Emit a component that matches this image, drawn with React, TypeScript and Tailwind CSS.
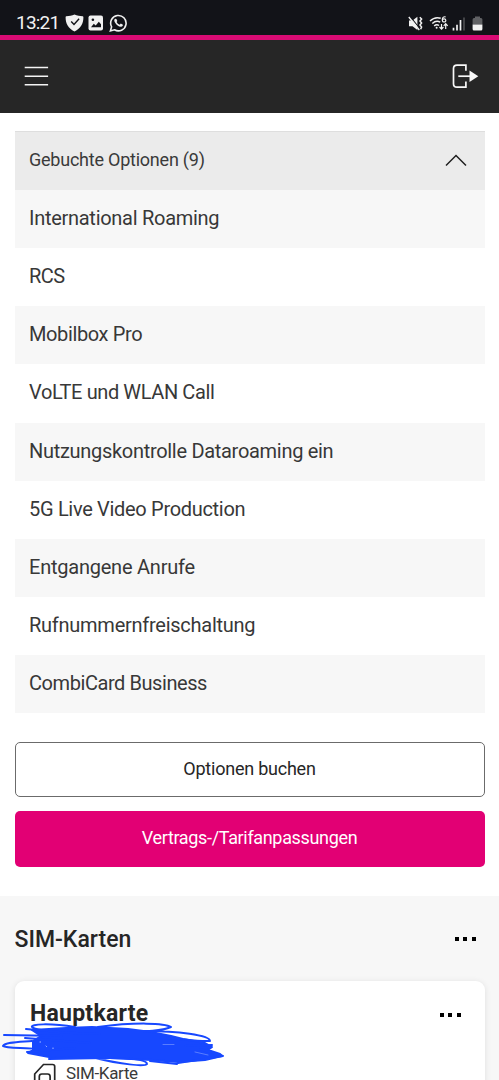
const options = [
  { name: "International Roaming", spacing: "tracking-[-0.28px]" },
  { name: "RCS", spacing: "tracking-[-0.6px]" },
  { name: "Mobilbox Pro", spacing: "tracking-[-0.38px]" },
  { name: "VoLTE und WLAN Call", spacing: "tracking-[-0.4px]" },
  { name: "Nutzungskontrolle Dataroaming ein", spacing: "tracking-[-0.3px]" },
  { name: "5G Live Video Production", spacing: "tracking-[-0.31px]" },
  { name: "Entgangene Anrufe", spacing: "tracking-[-0.23px]" },
  { name: "Rufnummernfreischaltung", spacing: "tracking-[-0.26px]" },
  { name: "CombiCard Business", spacing: "tracking-[-0.43px]" },
];

function StatusBar() {
  return (
    <div className="flex h-[35px] items-end justify-between bg-[#121318] pr-[16px] pb-[3px] pl-4 text-[#f1f1f1]">
      <div className="flex items-center">
        <span className="w-[43px] text-[19px] leading-[18px] tracking-[-0.8px] whitespace-nowrap">13:21</span>
        <svg className="ml-[6px]" width="19" height="18" viewBox="0 0 19 18">
          <path d="M9.5 0.6C7 1.8 4 2.2 1.5 2.2C.9 2.2.6 2.7.6 3.3C.6 9.8 3.2 14.3 9.5 17.6C15.8 14.3 18.4 9.8 18.4 3.3C18.4 2.7 18.1 2.2 17.5 2.2C15 2.2 12 1.8 9.5.6Z" fill="currentColor" />
          <path d="M6.2 7.5L9 10.5L14.1 4.8" fill="none" stroke="#121318" strokeWidth="1.4" />
        </svg>
        <svg className="ml-[4px]" width="16" height="16" viewBox="0 0 16 16">
          <rect x="0.5" y="0.5" width="14.5" height="15" rx="2" fill="currentColor" />
          <path d="M3 12.3L5.8 8.8L7.7 10.6L10.8 6.7L13 9.3V12.3Z" fill="#121318" />
          <circle cx="4.9" cy="4.7" r="1.3" fill="#121318" />
        </svg>
        <svg className="ml-[5px]" width="19" height="18" viewBox="0 0 19 18">
          <path d="M1.4 16.9L2.6 12.8A7.7 7.7 0 1 1 5.5 15.8Z" fill="none" stroke="currentColor" strokeWidth="1.6" />
          <path d="M6.2 4.8C5.1 5.4 4.9 6.9 6 8.6C7.5 11.1 9.7 12.9 12.1 12.8C13.4 12.6 14 11.6 13.9 10.7L11.8 9.6L10.7 10.8C9.3 10.3 8.2 9.2 7.6 8L8.3 7L7.4 4.9Z" fill="currentColor" />
        </svg>
      </div>
      <div className="mb-[1px] flex items-center">
        <svg width="15" height="15" viewBox="0 0 15 15">
          <path d="M1 4.5H4.5L9.4 .8V14L4.5 10.2H1Z" fill="currentColor" />
          <path d="M2.4 .8L12.2 13" stroke="#121318" strokeWidth="1.1" />
          <path d="M.8 1L11.3 14" stroke="currentColor" strokeWidth="1.4" />
          <path d="M11.8 1.2L13.6 3L12 5L13.6 7L12 9L13.6 11L12.6 13.2" fill="none" stroke="currentColor" strokeWidth="1.5" />
        </svg>
        <svg className="ml-[6px]" width="20" height="16" viewBox="0 0 20 16">
          <path d="M1 6Q6 1.2 11.7 3.3M3.3 8.5Q7.2 5 11.2 7.2M5.2 11Q7.5 8.8 10 10.5" fill="none" stroke="currentColor" strokeWidth="1.5" />
          <circle cx="7.6" cy="12.7" r="1" fill="currentColor" />
          <path d="M16.6 1.8Q13.2 1.3 13.3 5Q13.3 7 15.1 7Q16.9 6.9 16.8 5.3Q16.7 3.7 15 3.8Q13.7 4 13.3 5" fill="none" stroke="currentColor" strokeWidth="1.2" />
          <path d="M12.5 9V14M10.5 12L12.5 14.2L14.5 12M16.7 14V8.8M14.7 10.8L16.7 8.7L18.7 10.8" fill="none" stroke="currentColor" strokeWidth="1.2" />
        </svg>
        <svg className="ml-[3px]" width="14" height="15" viewBox="0 0 14 15">
          <path d="M1.5 11.8V14.5M5 8.8V14.5M8.5 4V14.5" stroke="currentColor" strokeWidth="1.7" />
          <path d="M12 1.5V14.5" stroke="#4c4d50" strokeWidth="1.7" />
        </svg>
        <svg className="ml-[6px]" width="11" height="15" viewBox="0 0 11 15">
          <path d="M3 0.5H8V2H9Q10.4 2 10.4 3.5V8.6H.6V3.5Q.6 2 2 2H3Z" fill="#606164" />
          <path d="M.6 8.6H10.4V13Q10.4 14.5 9 14.5H2Q.6 14.5 .6 13Z" fill="currentColor" />
        </svg>
      </div>
    </div>
  );
}

function Header() {
  return (
    <header className="flex h-[78px] items-start justify-between border-t-[5px] border-[#d90b74] bg-[#262626] pr-5 pl-6">
      <button className="mt-[26px]" aria-label="Menü">
        <svg width="25" height="22" viewBox="0 0 25 22" stroke="#f4f4f4" strokeWidth="1.5">
          <path d="M.7 1.6H24.1M.7 10.2H24.1M.7 18.8H24.1" />
        </svg>
      </button>
      <button className="mt-[23px]" aria-label="Abmelden">
        <svg width="27" height="26" viewBox="0 0 27 26">
          <path d="M13.9 7.7V2.1H5Q1.5 2.1 1.5 5.6V20.7Q1.5 24.2 5 24.2H13.9V18.6" fill="none" stroke="#f8f8f8" strokeWidth="1.7" />
          <path d="M6.3 13.2H18" stroke="#f8f8f8" strokeWidth="1.7" />
          <path d="M17.5 7.4L26.3 13.2L17.5 19Z" fill="#f8f8f8" />
        </svg>
      </button>
    </header>
  );
}

function MoreButton() {
  return (
    <button className="flex gap-[4.4px]" aria-label="Mehr">
      <span className="size-1 bg-black" />
      <span className="size-1 bg-black" />
      <span className="size-1 bg-black" />
    </button>
  );
}

function Scribble() {
  return (
    <svg className="pointer-events-none absolute top-[126px] left-0" width="230" height="46" viewBox="0 1022 230 46" fill="none" stroke="#1748ff" strokeWidth="2" strokeLinecap="round" strokeLinejoin="round">
      <path d="M32 1030L66 1028L92 1027L128 1029L151 1032L171 1036L183 1039L205 1043L212 1047L208 1050L220 1054L222 1056L205 1060L178 1062L152 1060L110 1058L74 1058L49 1057L28 1053L33 1050V1041L41 1036Z" fill="#1748ff" />
      <path d="M75 1027C50 1023 30 1024 32 1027C36 1031 65 1033 100 1034M98 1027C135 1022 165 1023 171 1027C160 1032 140 1031 120 1031M26 1029L70 1033M4 1035L62 1036M25 1038L90 1043M145 1031C177 1031 210 1035 210 1041C195 1042 175 1037 160 1038M32 1041C20 1042 5 1042 3 1046C6 1049 30 1047 34 1049M27 1052L75 1048M49 1059L105 1058M95 1058C120 1064 145 1067 147 1064C147 1059 125 1058 110 1058M150 1061L177 1064M178 1063L223 1056L200 1049M185 1046L212 1045" />
      <path d="M40 1042H40.5M46 1046L46.5 1046.5M53 1048V1048.5" stroke="#dce4ff" strokeWidth="0.8" />
      <path d="M163 1044.5H174M195 1052L208 1055" stroke="#9db2ff" strokeWidth="0.5" />
    </svg>
  );
}

export default function App() {
  return (
    <div className="h-[1080px] w-[499px] overflow-hidden bg-white font-['Roboto',sans-serif] text-[#262626]">
      <StatusBar />
      <Header />

      <main>
        <section className="px-[14.5px] pt-[18px]">
          <button className="flex h-[59px] w-full items-center justify-between border-t border-[#dedede] bg-[#ebebeb] pr-[18px] pb-[2px] pl-[14.5px]">
            <span className="pb-[1px] text-[18px] tracking-[-0.23px] text-[#3a3a3a]">Gebuchte Optionen (9)</span>
            <svg width="22" height="13" viewBox="0 0 22 13" fill="none" stroke="#202020" strokeWidth="1.5">
              <path d="M1 11.5L11 1.5L21 11.5" />
            </svg>
          </button>
          <ul>
            {options.map((option) => (
              <li key={option.name} className="flex h-[58.15px] items-center pb-[2px] pl-[14.5px] text-[20px] text-[#383838] odd:bg-[#f7f7f7]">
                <span className={option.spacing}>{option.name}</span>
              </li>
            ))}
          </ul>
          <div className="mt-[29px] flex flex-col gap-[14px]">
            <button className="h-[55px] rounded-[5px] border border-[#6b6b6b] pb-[3px] text-[18px] tracking-[-0.23px]">
              Optionen buchen
            </button>
            <button className="h-[56px] rounded-[5px] bg-[#e20074] pb-[3px] text-[18px] tracking-[-0.34px] text-white">
              Vertrags-/Tarifanpassungen
            </button>
          </div>
        </section>

        <section className="relative mt-[29px] h-[184px] bg-[#f7f7f7] px-[14.5px]">
          <div className="flex h-[84.5px] items-center justify-between pr-[9px]">
            <h2 className="pt-[3px] text-[23px] font-medium">SIM-Karten</h2>
            <MoreButton />
          </div>
          <div className="h-[140px] rounded-t-[9px] bg-white pt-[17px] pr-6 pl-[15.5px] shadow-[0_1px_6px_rgba(0,0,0,0.1)]">
            <div className="flex h-8 items-center justify-between">
              <h3 className="text-[23px] font-bold tracking-[0.25px]">Hauptkarte</h3>
              <div className="pt-[3px]">
                <MoreButton />
              </div>
            </div>
            <div className="mt-[30px] flex items-start pl-[3px]">
              <svg className="mt-[3px]" width="24" height="30" viewBox="0 0 24 30" fill="none" stroke="#262626" strokeWidth="1.7">
                <path d="M1.7 29V11L10.5 1.5H19.5Q21.7 1.5 21.7 3.5V29" />
                <path d="M6.3 22V13.5Q6.3 11 8.8 11H14.6Q17.1 11 17.1 13.5V22" />
              </svg>
              <span className="mt-[6px] ml-[9px] text-[17px] leading-[14px] tracking-[-0.35px] text-[#3a3a3a]">SIM-Karte</span>
            </div>
          </div>
          <Scribble />
        </section>
      </main>
    </div>
  );
}
